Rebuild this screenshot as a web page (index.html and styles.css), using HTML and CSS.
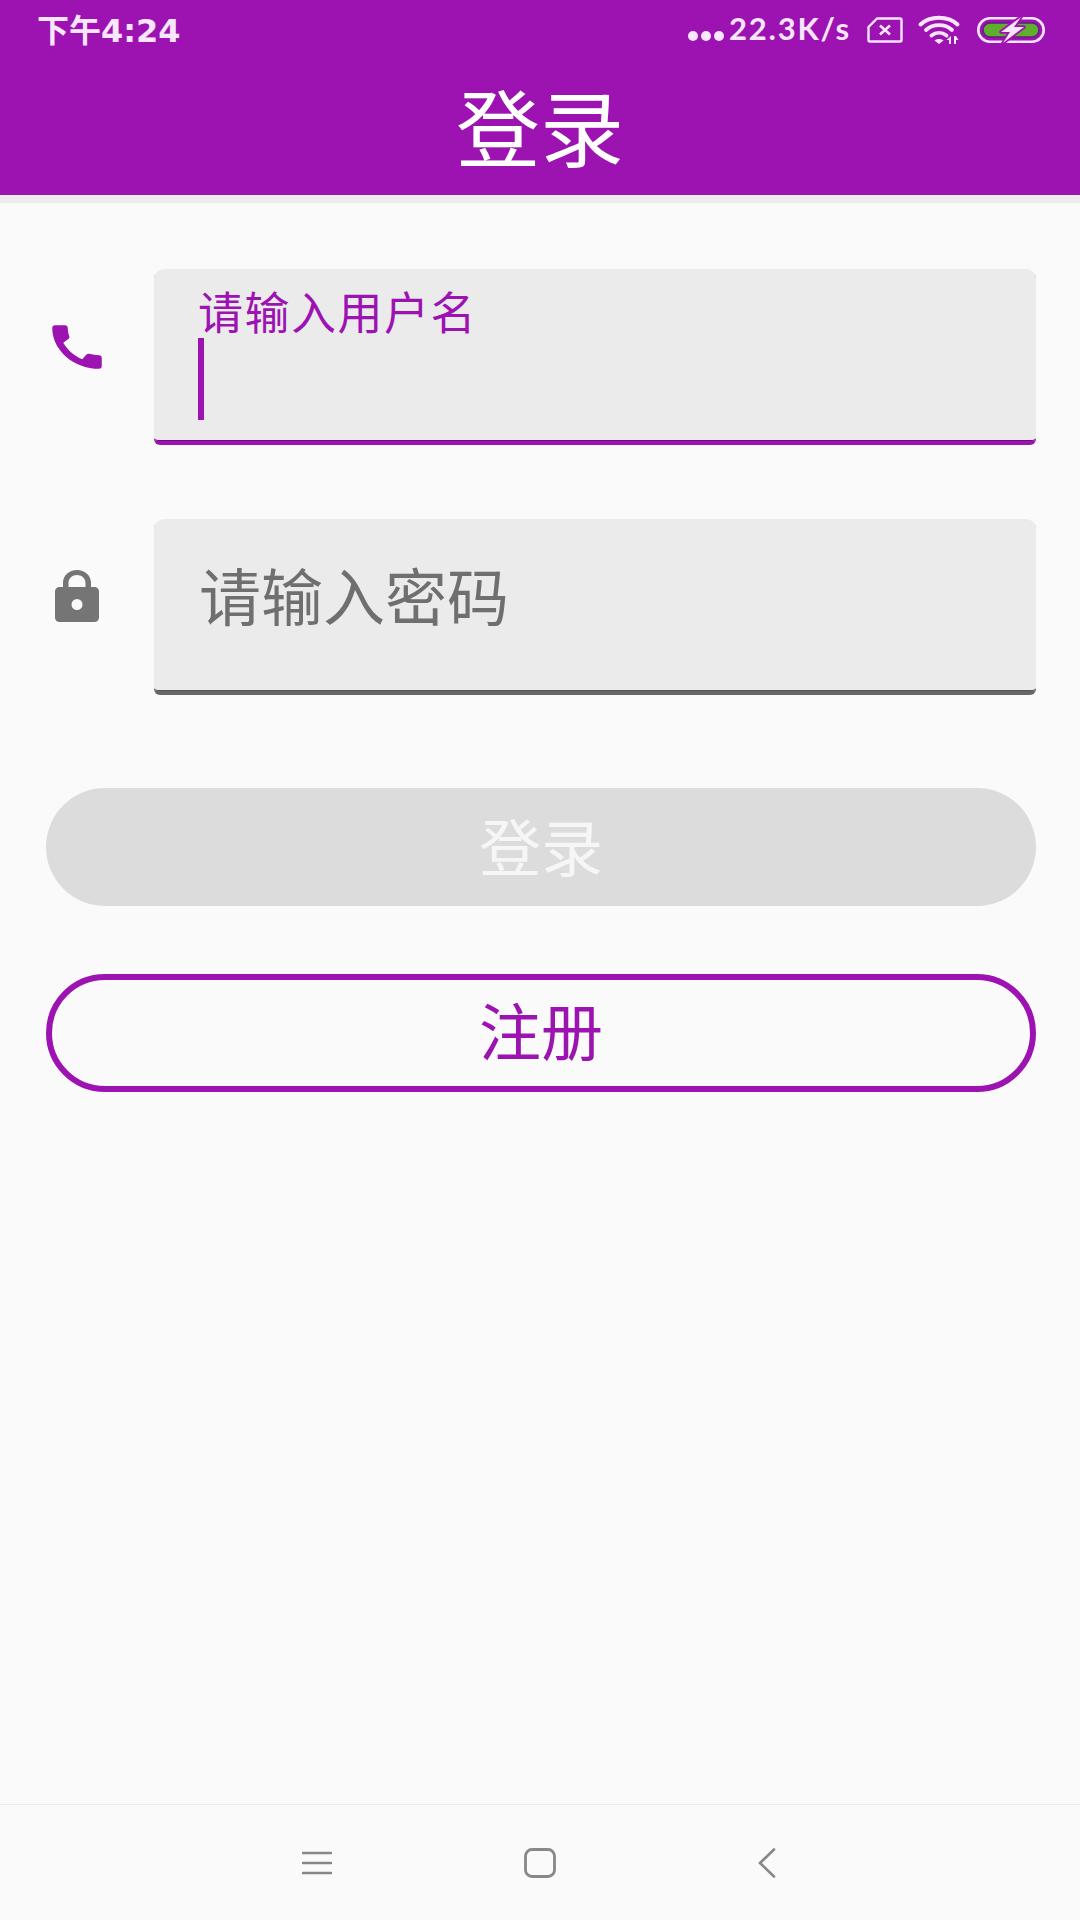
FILE: index.html
```html
<!DOCTYPE html>
<html lang="zh">
<head>
    <title>登录</title>
    <meta name="viewport" content="width=device-width, initial-scale=1.0">
    <link rel="stylesheet" href="styles.css">
</head>
<body>

    <!-- Status bar + toolbar -->
    <header class="appHeader">
        <div class="statusBar">
            <span class="clock">下午4:24</span>
            <div class="statusRight">
                <span class="dots"><i></i><i></i><i></i></span>
                <span class="netSpeed">22.3K/s</span>
                <svg class="simIcon" width="36" height="26" viewBox="0 0 36 26">
                    <path d="M10 1.500H33a1.500 1.500 0 0 1 1.500 1.500V23a1.500 1.500 0 0 1-1.500 1.500H3A1.500 1.500 0 0 1 1.500 23V10z" fill="none" stroke="#fbe6ff" stroke-width="2.400" stroke-linejoin="round"/>
                    <path d="M13 8.500l10 9M23 8.500l-10 9" stroke="#fbe6ff" stroke-width="2.600"/>
                </svg>
                <svg class="wifiIcon" width="44" height="30" viewBox="0 0 44 30">
                    <path d="M2.500 9.500C12 .5 30 .5 39.500 9.500" fill="none" stroke="#fbe6ff" stroke-width="3.800" stroke-linecap="round"/>
                    <path d="M8 15C15 8.500 27 8.500 34 15" fill="none" stroke="#fbe6ff" stroke-width="3.800" stroke-linecap="round"/>
                    <path d="M13.500 20.500c4.500-3.500 10.500-3.500 15 0" fill="none" stroke="#fbe6ff" stroke-width="3.800" stroke-linecap="round"/>
                    <path d="M16.500 25.500c2.500-2 6.500-2 9 0L21 29z" fill="#fbe6ff"/>
                    <path d="M33 21v8h-2v-4h-2.500zM36 29v-8h2l2.500 4H38v4z" fill="#fbe6ff"/>
                </svg>
                <svg class="batteryIcon" width="68" height="26" viewBox="0 0 68 26">
                    <rect x="1.300" y="1.300" width="65.400" height="23.400" rx="11.700" fill="none" stroke="#fbe6ff" stroke-width="2.600"/>
                    <rect x="6" y="6" width="56" height="14" rx="7" fill="#5fae2e" stroke="#6b1a86" stroke-width="1.500"/>
                    <path d="M44 0L24 15h9l-7 11L47 10h-10l7-10z" fill="#fbe6ff" stroke="#9c13b2" stroke-width="3.500" paint-order="stroke" stroke-linejoin="round"/>
                </svg>
            </div>
        </div>
        <div class="toolbar">
            <h1>登录</h1>
        </div>
    </header>

    <!-- Login form -->
    <main class="loginForm">
        <div class="inputRow">
            <svg class="phoneIcon" viewBox="0 0 24 24" preserveAspectRatio="none">
                <path d="M20.010 15.380c-1.230 0-2.420-.2-3.530-.56-.35-.12-.74-.03-1.010.24l-1.570 1.970c-2.830-1.350-5.480-3.900-6.890-6.830l1.950-1.660c.27-.28.35-.67.24-1.020-.37-1.110-.56-2.300-.56-3.530 0-.54-.45-.99-.99-.99H4.190C3.650 3 3 3.240 3 3.990 3 13.280 10.730 21 20.010 21c.71 0 .99-.63.99-1.180v-3.450c0-.54-.45-.99-.99-.99z"/>
            </svg>
            <div class="inputField focused">
                <label>请输入用户名</label>
                <span class="caret"></span>
            </div>
        </div>

        <div class="inputRow">
            <svg class="lockIcon" width="44" height="52" viewBox="0 0 44 52">
                <path fill-rule="evenodd" d="M8 17v-4C8 5.500 14 0 22 0s14 5.500 14 13v4h3.500A4.500 4.500 0 0 1 44 21.500v26a4.500 4.500 0 0 1-4.500 4.500h-35A4.500 4.500 0 0 1 0 47.500v-26A4.500 4.500 0 0 1 4.500 17zM13.500 17h17v-4c0-4.500-3.800-8-8.500-8s-8.500 3.500-8.500 8zM22 40a5.500 5.500 0 1 0 0-11 5.500 5.500 0 0 0 0 11z"/>
            </svg>
            <div class="inputField">
                <span class="placeholder">请输入密码</span>
            </div>
        </div>

        <button class="pillButton loginButton">登录</button>
        <button class="pillButton registerButton">注册</button>
    </main>

    <!-- System navigation -->
    <nav class="navBar">
        <svg class="navMenu" width="30" height="24" viewBox="0 0 30 24">
            <path d="M1 2h28M1 12h28M1 22h28" stroke="#888" stroke-width="2.600" stroke-linecap="round"/>
        </svg>
        <svg class="navHome" width="32" height="30" viewBox="0 0 32 30">
            <rect x="1.500" y="1.500" width="29" height="27" rx="6.500" fill="none" stroke="#888" stroke-width="2.800"/>
        </svg>
        <svg class="navBack" width="18" height="30" viewBox="0 0 18 30">
            <path d="M16 1.500L2 15l14 13.500" fill="none" stroke="#888" stroke-width="2.600" stroke-linecap="round"/>
        </svg>
    </nav>

</body>
</html>
```

FILE: styles.css
```css
html, body {
    margin: 0;
    height: 100%;
}

body {
    display: flex;
    flex-direction: column;
    height: 1920px;
    background-color: #fafafa;
    font-family: "Noto Sans CJK SC", "Noto Sans", sans-serif;
}

.appHeader {
    background-color: #9c13b2;
    border-bottom: 8px solid #ececec;
}

.statusBar {
    display: flex;
    justify-content: space-between;
    align-items: center;
    box-sizing: border-box;
    height: 60px;
    padding: 0 35px 4px 37px;
    color: #fbe6ff;
}

.clock {
    font-family: "DejaVu Sans", "Noto Sans CJK SC", sans-serif;
    font-size: 32px;
    font-weight: 700;
}

.statusRight {
    display: flex;
    align-items: center;
    padding-top: 4px;
}

.dots {
    display: flex;
    gap: 3px;
    margin-top: 12px;
    margin-right: 5px;
}

.dots i {
    width: 10px;
    height: 10px;
    border-radius: 50%;
    background-color: #fbe6ff;
}

.netSpeed {
    font-family: Lato, "Noto Sans", sans-serif;
    font-size: 31px;
    font-weight: 700;
    letter-spacing: 1.8px;
    margin-top: -4px;
}

.simIcon {
    margin-left: 16px;
}

.wifiIcon {
    margin-left: 15px;
}

.batteryIcon {
    margin-left: 15px;
}

.toolbar {
    display: flex;
    justify-content: center;
    align-items: center;
    box-sizing: border-box;
    height: 135px;
    padding-bottom: 6px;
}

.toolbar h1 {
    margin: 0;
    font-size: 84px;
    font-weight: 400;
    line-height: 1;
    color: #ffffff;
}

.loginForm {
    flex: 1;
    display: flex;
    flex-direction: column;
    padding: 66px 44px 0 46px;
}

.inputRow {
    display: flex;
    margin-bottom: 74px;
}

.phoneIcon {
    flex: none;
    width: 66px;
    height: 58px;
    margin: 49px 44px 0 -2px;
    fill: #9c13b2;
}

.lockIcon {
    flex: none;
    margin: 51px 55px 0 9px;
    fill: #757575;
}

.inputField {
    flex: 1;
    box-sizing: border-box;
    height: 176px;
    padding: 0 0 0 45px;
    background-color: #ebebeb;
    border-bottom: 4px solid #666666;
    border-radius: 10px 10px 6px 6px;
    box-shadow: inset 0 -1px 0 #555555;
}

.inputField.focused {
    border-bottom-color: #9c13b2;
    box-shadow: inset 0 -1px 0 #6d0c80;
}

.inputField label {
    display: block;
    margin-top: 15px;
    margin-left: -1px;
    font-size: 45px;
    line-height: 54px;
    letter-spacing: 1.5px;
    color: #9c13b2;
}

.caret {
    display: block;
    width: 6px;
    height: 82px;
    margin-left: -1px;
    background-color: #9c13b2;
}

.placeholder {
    display: block;
    margin-top: 31px;
    font-size: 62px;
    line-height: 88px;
    color: #6f6f6f;
}

.pillButton {
    display: block;
    box-sizing: border-box;
    width: 100%;
    height: 118px;
    padding: 0 0 8px;
    border-radius: 59px;
    font-family: inherit;
    font-size: 62px;
    line-height: 1;
}

.loginButton {
    margin-top: 19px;
    padding-bottom: 5px;
    border: none;
    background-color: #dcdcdc;
    color: #f6f6f6;
}

.registerButton {
    margin-top: 68px;
    border: 6px solid #9c13b2;
    background-color: transparent;
    color: #9c13b2;
}

.navBar {
    display: flex;
    align-items: center;
    height: 115px;
    padding-left: 302px;
    border-top: 1px solid #ececec;
}

.navHome {
    margin-left: 192px;
}

.navBack {
    margin-left: 202px;
}
```
